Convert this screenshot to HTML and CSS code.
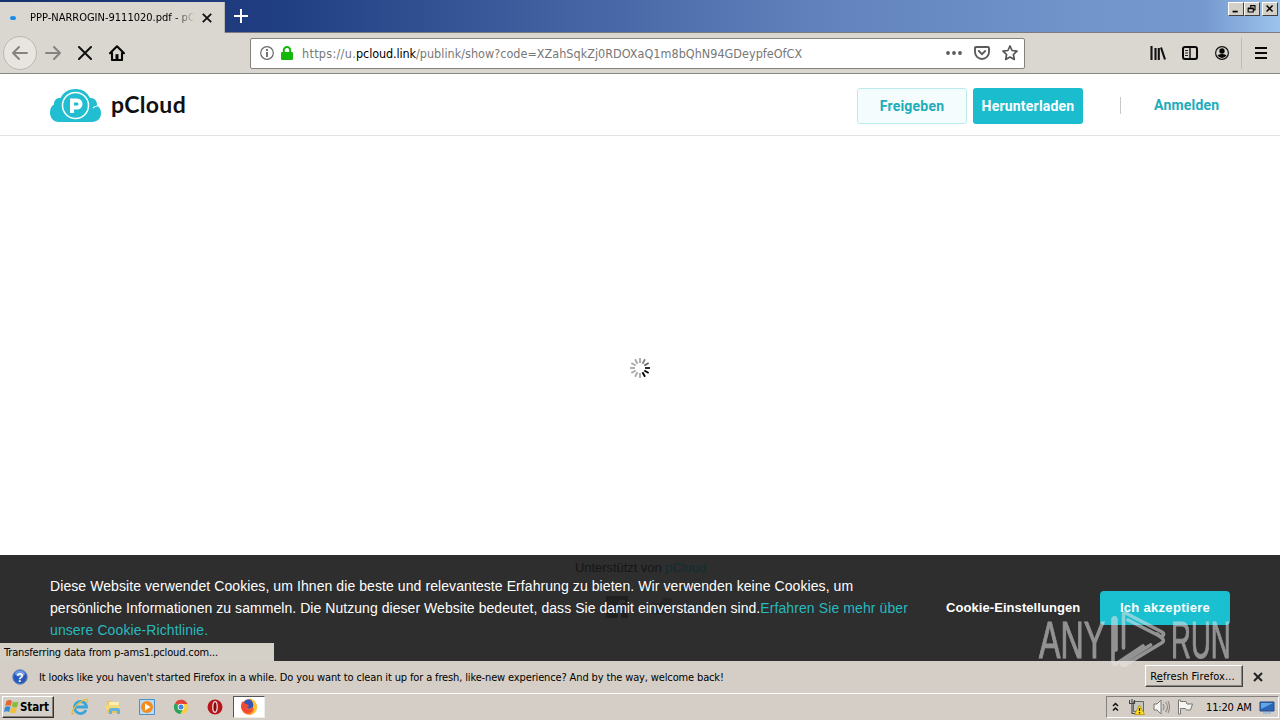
FILE: index.html
```html
<!DOCTYPE html>
<html lang="de">
<head>
<meta charset="utf-8">
<title>PPP-NARROGIN-9111020.pdf - pCloud</title>
<link rel="stylesheet" href="styles.css">
</head>
<body>
<header class="tabs">
  <div class="tab"><i class="tab-dot"></i><span class="tab-title">PPP-NARROGIN-9111020.pdf - pC</span>
    <svg class="tab-close" width="10" height="10" viewBox="0 0 10 10"><path d="M.8.8l8.4 8.4M9.2.8L.8 9.2" stroke="#111" stroke-width="1.8"/></svg>
  </div>
  <svg class="new-tab" width="14" height="14" viewBox="0 0 14 14"><path d="M7 0v14M0 7h14" stroke="#fff" stroke-width="2"/></svg>
  <div class="window-buttons">
    <svg width="16" height="14" viewBox="0 0 16 14"><path d="M4 10h6" stroke="#000" stroke-width="2"/></svg>
    <svg width="16" height="14" viewBox="0 0 16 14"><path d="M6.500 5V3h5v5h-2M3.500 6.500h6v4h-6zM3 6h7M6 3h6" fill="none" stroke="#000" stroke-width="1.300"/></svg>
    <svg class="win-close" width="16" height="14" viewBox="0 0 16 14"><path d="M4 3l7 7M11 3l-7 7" stroke="#000" stroke-width="1.800"/></svg>
  </div>
</header>
<nav class="toolbar">
  <span class="back"><svg width="18" height="16" viewBox="0 0 18 16"><path d="M16 8H2M8 2L2 8l6 6" fill="none" stroke="#85837f" stroke-width="2" stroke-linecap="round" stroke-linejoin="round"/></svg></span>
  <svg class="forward" width="18" height="16" viewBox="0 0 18 16"><path d="M2 8h14M10 2l6 6-6 6" fill="none" stroke="#85837f" stroke-width="2" stroke-linecap="round" stroke-linejoin="round"/></svg>
  <svg class="stop" width="14" height="14" viewBox="0 0 14 14"><path d="M1 1l12 12M13 1L1 13" stroke="#111" stroke-width="2" stroke-linecap="round"/></svg>
  <svg class="home" width="16" height="16" viewBox="0 0 16 16"><path d="M1 8.200L8 1.300l7 6.900M3 8v7h10V8" fill="none" stroke="#080808" stroke-width="2.100" stroke-linecap="round" stroke-linejoin="round"/><path d="M6.500 14.500V9.200h3v5.300z" fill="#080808"/></svg>
  <div class="url">
    <svg class="info" width="14" height="14" viewBox="0 0 14 14"><circle cx="7" cy="7" r="6.300" fill="none" stroke="#686868" stroke-width="1.200"/><path d="M7 3v2M7 6v5" stroke="#555" stroke-width="1.600"/></svg>
    <svg class="lock" width="12" height="14" viewBox="0 0 12 14"><path d="M2.800 7V4.200a3.200 3.200 0 016.400 0V7" fill="none" stroke="#12b90b" stroke-width="2"/><rect y="6" width="12" height="8" rx="1.200" fill="#12b90b"/></svg>
    <span class="address"><span class="scheme">https://u.</span><b>pcloud.link</b>/publink/show?code=XZahSqkZj0RDOXaQ1m8bQhN94GDeypfeOfCX</span>
    <svg class="dots" width="16" height="4" viewBox="0 0 16 4"><g fill="#5c5c5c"><circle cx="2" cy="2" r="1.900"/><circle cx="8" cy="2" r="1.900"/><circle cx="14" cy="2" r="1.900"/></g></svg>
    <svg class="pocket" width="16" height="14" viewBox="0 0 16 14"><path d="M2 1h12q1 0 1 1v4a7 7 0 01-14 0V2q0-1 1-1z" fill="none" stroke="#5c5c5c" stroke-width="1.900"/><path d="M4.800 5L8 8.100 11.200 5" fill="none" stroke="#5c5c5c" stroke-width="1.900" stroke-linecap="round"/></svg>
    <svg class="star" width="16" height="16" viewBox="0 0 16 16"><path d="M8 1l2.100 4.500 4.900.6-3.600 3.400.9 4.900L8 12l-4.300 2.400.9-4.900L1 6.100l4.900-.6z" fill="none" stroke="#555" stroke-width="1.700" stroke-linejoin="round"/></svg>
  </div>
  <svg class="library" width="16" height="14" viewBox="0 0 16 14"><path d="M1.500 0v14M5.500 2v12M8.800 2v12M11 1.500l4 12" stroke="#111" stroke-width="2.100"/></svg>
  <svg class="sidebar" width="16" height="14" viewBox="0 0 16 14"><rect x="1" y="1" width="14" height="12" rx="2" fill="none" stroke="#080808" stroke-width="2"/><path d="M8 1v12" stroke="#080808" stroke-width="1.400"/><path d="M3 4.500h3M3 7h3M3 9.500h3" stroke="#222"/></svg>
  <svg class="account" width="14" height="14" viewBox="0 0 14 14"><circle cx="7" cy="7" r="6.400" fill="none" stroke="#111" stroke-width="1.200"/><circle cx="7" cy="5" r="2.700" fill="#080808"/><path d="M2.500 9.200q4.500-2.200 9 0Q10 12 7 12T2.500 9.200z" fill="#080808"/></svg>
  <i class="tool-line"></i>
  <svg class="menu" width="12" height="12" viewBox="0 0 12 12"><path d="M0 1h12M0 6h12M0 11h12" stroke="#080808" stroke-width="2"/></svg>
</nav>
<main class="page">
  <div class="site-header">
    <svg class="logo" width="52" height="34" viewBox="0 0 52 34"><path d="M9 33C3.500 33 0 29 0 23.500c0-4 1.500-6.500 4-8C4 11 6.500 8.500 10.500 9 13.500 3 19 0 25.500 0S37 3 40 9c4-.4 7.500 2.500 7 8 2.600 1.200 4 3.500 4 7 0 5.500-3.500 9-9 9z" fill="#20bed0"/><circle cx="25.500" cy="16.500" r="13" fill="none" stroke="#fff" stroke-width="1.500"/><path d="M47.500 17q-3 .2-4.500 2" fill="none" stroke="#fff" stroke-width="1.200"/><path d="M22 24V11.500h5a3.200 3.200 0 010 7h-5" fill="none" stroke="#fff" stroke-width="4"/></svg>
    <span class="brand">pCloud</span>
    <a class="share">Freigeben</a>
    <a class="download">Herunterladen</a>
    <i class="head-line"></i>
    <a class="login">Anmelden</a>
  </div>
  <div class="content">
    <svg class="spinner" width="20" height="20" viewBox="-10 -10 20 20" stroke-width="1.900">
      <g stroke="#aaa"><path d="M0-5v-5"/><path d="M0-5v-5" transform="rotate(330)"/><path d="M0-5v-5" transform="rotate(300)"/><path d="M0-5v-5" transform="rotate(270)"/><path d="M0-5v-5" transform="rotate(240)"/><path d="M0-5v-5" transform="rotate(210)"/><path d="M0-5v-5" transform="rotate(180)"/></g>
      <path d="M0-5v-5" transform="rotate(30)" stroke="#888"/><path d="M0-5v-5" transform="rotate(60)" stroke="#666"/><path d="M0-5v-5" transform="rotate(90)" stroke="#222"/><path d="M0-5v-5" transform="rotate(120)" stroke="#000"/><path d="M0-5v-5" transform="rotate(150)" stroke="#000"/>
    </svg>
  </div>
  <section class="cookies">
    <div class="powered">Unterstützt von <b>pCloud</b></div>
    <svg class="socials" width="68" height="24" viewBox="0 0 68 24"><path d="M0 0h22v22H0z" fill="#202020"/><path d="M12 22v-8H9v-3h3V8q0-4 4-4h3v3h-3q-1 0-1 1v3h4l-1 3h-3v8" fill="#303030"/><path d="M46 5q4 4 9 2 1-6 6-5l6 1-2 3q0 10-9 12-6 1-10-2 5 0 6-2-5-2-6-9" fill="#252525"/></svg>
    <p class="cookie-text"><span class="line1">Diese Website verwendet Cookies, um Ihnen die beste und relevanteste Erfahrung zu bieten. Wir verwenden keine Cookies, um</span><br><span class="line2">persönliche Informationen zu sammeln. Die Nutzung dieser Website bedeutet, dass Sie damit einverstanden sind.<a>Erfahren Sie mehr über</a></span><br><a class="line3">unsere Cookie-Richtlinie.</a></p>
    <a class="settings">Cookie-Einstellungen</a>
    <a class="accept">Ich akzeptiere</a>
    <div class="status">Transferring data from p-ams1.pcloud.com...</div>
  </section>
</main>
<aside class="notice">
  <svg class="help" width="16" height="16" viewBox="0 0 16 16"><circle cx="8" cy="8" r="7.300" fill="#2858b8" stroke="#7290c0"/><ellipse cx="8" cy="4.500" rx="5" ry="3" fill="#6f9be4"/><text x="8" y="12.500" text-anchor="middle" class="question">?</text></svg>
  <span class="notice-text">It looks like you haven't started Firefox in a while. Do you want to clean it up for a fresh, like-new experience? And by the way, welcome back!</span>
  <button class="refresh">R<u>e</u>fresh Firefox...</button>
  <svg class="notice-close" width="10" height="10" viewBox="0 0 10 10"><path d="M1 1l8 8M9 1L1 9" stroke="#222" stroke-width="2"/></svg>
</aside>
<footer class="taskbar">
  <button class="start"><svg width="16" height="16" viewBox="0 0 16 16"><path d="M2.500 2q3-2 5.500 0L6.700 7q-2.700-1.500-5.500 0z" fill="#e86335"/><path d="M9 2.500q2.500 1.500 5.500 0L13.200 8q-3 1.300-5.500-.5z" fill="#8bbb3c"/><path d="M1 8q2.800-1.500 5.500 0L5.200 13q-2.600-1.600-5.200 0z" fill="#3989d2"/><path d="M7.400 8.500q2.600 1.600 5.500 0l-1.300 5q-3 1.300-5.500-.3z" fill="#f4bf30"/></svg><span>Start</span></button>
  <svg class="app" width="18" height="18" viewBox="0 0 18 18"><path d="M15 12a6 6 0 11.500-3H5" fill="none" stroke="#38a5dc" stroke-width="2.800"/><path d="M3 15C-1 19 1 10 8 5s10-5 8 0" fill="none" stroke="#e4bd3e" stroke-width="1.400"/></svg>
  <svg class="app" width="18" height="18" viewBox="0 0 18 18"><path d="M2 3h5l1 2h7v10H2z" fill="#e9c65c"/><path d="M4 4h10v7H4z" fill="#fbf0b0"/><path d="M1 7h14v5H1z" fill="#f1d878"/><path d="M4 16v-4q0-2 2-2h7q2 0 2 2v4h-3v-3H7v3z" fill="#62b4dc"/></svg>
  <svg class="app" width="18" height="18" viewBox="0 0 18 18"><path d="M1.500 1.500h15v15h-15z" fill="#b9dbf5" stroke="#4d91cb"/><circle cx="9" cy="9" r="6" fill="#f58c1f"/><path d="M7 5.500v7L12.500 9z" fill="#fff"/></svg>
  <svg class="app" width="18" height="18" viewBox="0 0 18 18"><path d="M9 9L3 5.200A7 7 0 0115.500 6L9 6z" fill="#e34336"/><path d="M3 5.200A7 7 0 008.500 16l3-5L9 9z" fill="#2aa557"/><path d="M15.500 6A7 7 0 018.500 16L12 9l-2-3z" fill="#f8cf3b"/><circle cx="9" cy="9" r="3.300" fill="#fff"/><circle cx="9" cy="9" r="2.500" fill="#4587df"/></svg>
  <svg class="app" width="18" height="18" viewBox="0 0 18 18"><circle cx="9" cy="9" r="7.500" fill="#b9151b"/><ellipse cx="9" cy="9" rx="2.200" ry="5.300" fill="#850a0e" stroke="#f1dada" stroke-width="1.300"/></svg>
  <span class="active-app"><svg width="18" height="18" viewBox="0 0 18 18"><circle cx="9" cy="9" r="7.800" fill="#f9702a"/><path d="M8 1l3-.5q6 3 6 9-1 7-8 7.500 4-2 5-6z" fill="#ffc531"/><path d="M4 4q3-4 7-2 3 3 2 7l-4 2-4-3z" fill="#3457b7"/><path d="M2 3q1 3 5 3l2 2-3 2q3 3 7 0-1 5-6 5-6-2-6-7z" fill="#ef4936"/></svg></span>
  <div class="tray">
    <svg class="chevrons" width="7" height="10" viewBox="0 0 7 10"><path d="M1 4l2.500-2.500L6 4M1 8.500L3.500 6 6 8.500" fill="none" stroke="#111" stroke-width="1.500"/></svg>
    <svg class="network" width="16" height="16" viewBox="0 0 16 16"><path d="M4.500 2.500h10v10h-10z" fill="#c7c7c2" stroke="#666"/><path d="M.5 1v3.500h5V1M3 0v4M3 5v9.500h4" fill="none" stroke="#444" stroke-width="1.100"/><path d="M10.500 6l5 9.500h-10z" fill="#ffdc22" stroke="#ad8800" stroke-width=".7"/><path d="M10.500 9v3M10.500 13v1.400" stroke="#222" stroke-width="1.300"/></svg>
    <svg class="sound" width="18" height="16" viewBox="0 0 18 16"><path d="M1 5h3l4-4v14l-4-4H1z" fill="#f5f5f2" stroke="#777"/><path d="M10 5q2 3 0 6M12.500 3q4 5 0 10M15 2q3 6 0 12" fill="none" stroke="#888" stroke-width="1.100"/></svg>
    <svg class="flag" width="18" height="16" viewBox="0 0 18 16"><path d="M1.500 1v14h2V9.500h5l1 1.500h4l2-6H10L9 2.500H3.500V1z" fill="#f5f5f2" stroke="#777"/></svg>
    <time>11:20 AM</time>
    <svg class="desktop" width="16" height="13" viewBox="0 0 16 13"><path d="M1 1h14v9H1z" fill="#2c66bb" stroke="#234b86"/><path d="M2 2h12L2 8z" fill="#62a7e5"/><path d="M4 12h8" stroke="#a2bcd8" stroke-width="2"/></svg>
  </div>
</footer>
<div class="any-run"><span class="any">ANY</span><svg width="60" height="68" viewBox="0 0 60 68"><path d="M5 45V14q-1-3-3 0v43q0 3 3 2l27-18M12.500 43V10q0-3 3-1.500L51 27q3 2 .5 4-2 1-4-.5L17 15M46 29l5 4q3 3-.5 5L14 60q-4 1-3.500-2l29-18" fill="none" stroke="#e5e5e5" stroke-width="3.600" stroke-linejoin="round" stroke-linecap="round"/></svg><span class="run">RUN</span></div>
</body>
</html>
```

FILE: styles.css
```css
*{box-sizing:border-box}
body{margin:0;width:1280px;height:720px;overflow:hidden;display:flex;flex-direction:column;font-family:"DejaVu Sans Condensed",sans-serif;background:#fff;position:relative}
svg{display:block;flex:none}
.tabs{height:33px;display:flex;flex:none;background:linear-gradient(90deg,#17306f 0,#203e82 22%,#4060a0 43%,#6283bd 65%,#7295cc 85%,#7599cf 94%,#9cc3ed 100%);border-bottom:1px solid #7a7c82}
.tab{width:225px;height:31px;margin-top:2px;background:#dad6d0;display:flex;align-items:center;padding-left:10px;border-right:1px solid #b8b7b4}
.tab-dot{width:6px;height:4px;background:#198bea;border-radius:50%;margin-right:14px}
.tab-title{font-size:11px;letter-spacing:0;width:165px;white-space:nowrap;overflow:hidden;-webkit-mask-image:linear-gradient(90deg,#000 87%,transparent)}
.tab-close{margin-left:7px}
.new-tab{margin:9px 0 0 9px}
.window-buttons{display:flex;margin:2px 2px 0 auto}
.window-buttons svg{background:#d4d0c8;border:1px solid;border-color:#fff #404040 #404040 #fff}
.window-buttons .win-close{margin-left:2px}
.toolbar{height:41px;flex:none;display:flex;align-items:center;background:#dad6d0;border-bottom:1px solid #858585;padding-left:3px}
.back{width:34px;height:34px;border:1px solid #bbb7b2;border-radius:50%;background:#e8e5e1;display:flex;align-items:center;justify-content:center}
.forward{margin-left:7px}
.stop{margin-left:16px}
.home{margin-left:17px}
.url{width:775px;height:31px;margin-left:125px;background:#fff;border:1px solid #85827e;border-radius:2px;display:flex;align-items:center;padding-left:9px}
.lock{margin-left:7px}
.address{font-size:12.500px;letter-spacing:.02px;color:#777;margin-left:9px;width:644px;white-space:nowrap}
.scheme{letter-spacing:.3px}
.address b{font-weight:400;color:#000;letter-spacing:-.1px}
.pocket{margin-left:12px}
.star{margin-left:12px}
.library{margin-left:125px}
.sidebar{margin-left:16px}
.account{margin-left:17px}
.tool-line{width:1px;height:31px;background:#bebab5;margin-left:12px}
.menu{margin-left:13px}
.page{height:587px;flex:none;display:flex;flex-direction:column}
.site-header{height:62px;display:flex;align-items:flex-start;border-bottom:1px solid #e2e2e2;padding-left:50px}
.logo{margin-top:15px}
.brand{font:700 23px/32px Lato,sans-serif;letter-spacing:.3px;color:#111;margin:14px 0 0 9px;width:746px}
.share,.download{width:110px;height:36px;border-radius:3px;margin-top:14px;text-align:center;font:700 14px/36px Roboto,sans-serif;letter-spacing:.2px}
.share{color:#21acba;background:#f5fcfe;border:1px solid #bcebee;line-height:34px}
.download{color:#fff;background:#1abcce;margin-left:6px}
.head-line{width:1px;height:17px;background:#c8c8c8;margin:23px 0 0 37px}
.login{font:700 14px/22px Roboto,sans-serif;letter-spacing:.2px;color:#21acba;margin:20px 0 0 33px}
.content{height:419px;display:grid;place-items:start center;padding-top:222px}
.cookies{height:106px;background:#2e2e2e;display:flex;align-items:flex-start;position:relative;padding-left:50px;color:#fff}
.powered{position:absolute;left:575px;top:4px;font:13px/17px "Liberation Sans",sans-serif;letter-spacing:-.05px;color:#161616;white-space:nowrap}
.powered b{font-weight:400;color:#102d31}
.socials{position:absolute;left:606px;top:41px}
.cookie-text{position:relative;margin:20px 0 0;width:896px;font:14px/22px "Liberation Sans",sans-serif;white-space:nowrap}
.cookie-text a{color:#27b9bf}
.line1{letter-spacing:.08px}
.line2{letter-spacing:.05px}
.line2 a{letter-spacing:.1px}
.line3{letter-spacing:.1px}
.settings{width:134px;margin-top:42px;font:700 13px/22px "Liberation Sans",sans-serif;letter-spacing:.07px;white-space:nowrap}
.accept{width:130px;height:34px;margin:36px 0 0 20px;background:#1abfd0;border-radius:4px;text-align:center;font:700 13px/34px "Liberation Sans",sans-serif;letter-spacing:.3px}
.status{position:absolute;left:0;bottom:0;width:274px;height:18px;background:#d4d0c8;color:#000;padding-left:4px;font-size:11px;letter-spacing:-.15px;line-height:20px}
.notice{height:32px;flex:none;background:#d5cec6;display:flex;align-items:center;padding-left:12px}
.question{font:700 12px "Liberation Sans",sans-serif;fill:#fff}
.notice-text{font-size:11px;letter-spacing:-.14px;margin-left:11px;width:1106px;white-space:nowrap}
.refresh{font:11px "DejaVu Sans Condensed",sans-serif;letter-spacing:.12px;width:98px;height:22px;padding:0 3px 0 0;background:#d5cec6;border:1px solid;border-color:#fff #444 #444 #fff;box-shadow:inset -1px -1px #8b8883;white-space:nowrap;margin-top:-2px}
.notice-close{margin-left:10px}
.taskbar{height:27px;flex:none;background:#d5cec6;border-top:1px solid #fff;display:flex;align-items:center}
.start{width:52px;height:22px;margin-left:2px;padding:0 0 0 1px;border:1px solid;border-color:#fff #333 #333 #fff;box-shadow:inset -1px -1px #858078;background:#d4d0c8;display:flex;align-items:center;font:700 11.500px "DejaVu Sans Condensed",sans-serif;color:#000}
.start span{letter-spacing:-.1px}
.app{margin-left:15.700px}
.start+.app{margin-left:17px}
.active-app{width:32px;height:22px;background:#fff;border:1px solid;border-color:#555 #eee #eee #555;margin-left:9px;display:grid;place-items:center}
.tray{width:173px;height:22px;margin:0 1px 0 auto;border:1px solid;border-color:#85817c #fff #fff #85817c;display:flex;align-items:center;padding-left:5px}
.network{margin-left:10px}
.sound{margin-left:8px}
.flag{margin-left:6px}
time{font-size:11px;letter-spacing:-.15px;width:47px;white-space:nowrap;margin-left:11px}
.desktop{margin-left:6px}
.any-run{position:absolute;left:1039px;top:605px;width:194px;height:68px;color:#e5e5e5;opacity:.55;pointer-events:none;display:flex}
.any-run span{font:51px/36px "Liberation Sans",sans-serif;-webkit-text-stroke:1px;transform-origin:left;white-space:nowrap;margin-top:18px}
.any-run .any{width:72px;transform:scaleX(.63)}
.any-run .run{width:60px;transform:scaleX(.54)}
```
